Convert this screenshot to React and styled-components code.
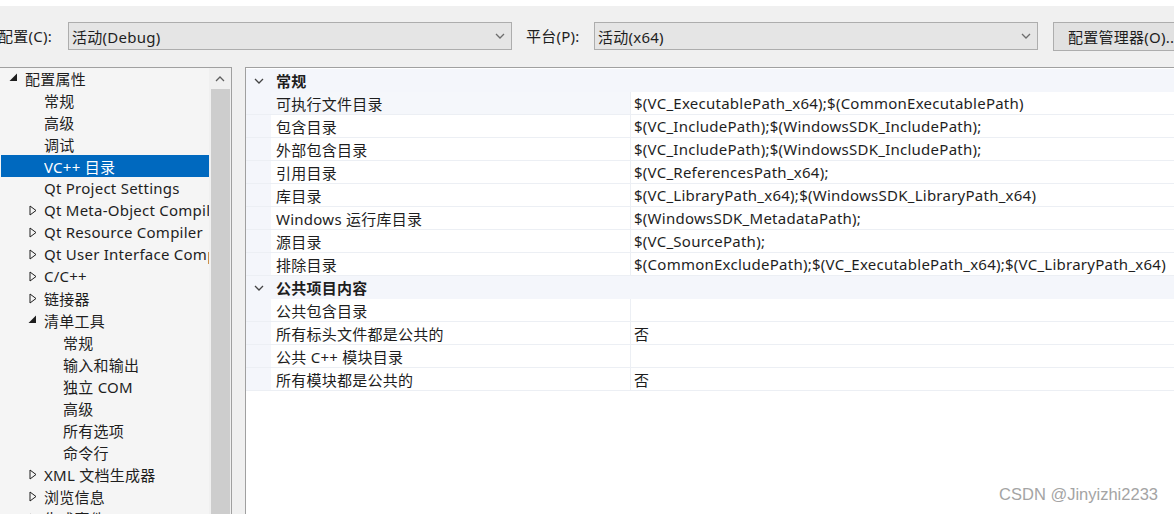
import React from 'react'
import styled, { createGlobalStyle } from 'styled-components'

const GlobalStyle = createGlobalStyle`
  html, body {
    margin: 0;
    padding: 0;
    background: #ffffff;
  }
  body {
    font-family: "Noto Sans", "Noto Sans CJK SC", sans-serif;
    font-size: 15px;
    letter-spacing: 0.25px;
    color: #1e1e1e;
  }
`

const tree = [
  { label: '配置属性', level: 0, arrow: 'open' },
  { label: '常规', level: 1 },
  { label: '高级', level: 1 },
  { label: '调试', level: 1 },
  { label: 'VC++ 目录', level: 1, selected: true },
  { label: 'Qt Project Settings', level: 1 },
  { label: 'Qt Meta-Object Compiler', level: 1, arrow: 'closed' },
  { label: 'Qt Resource Compiler', level: 1, arrow: 'closed' },
  { label: 'Qt User Interface Compiler', level: 1, arrow: 'closed' },
  { label: 'C/C++', level: 1, arrow: 'closed' },
  { label: '链接器', level: 1, arrow: 'closed' },
  { label: '清单工具', level: 1, arrow: 'open' },
  { label: '常规', level: 2 },
  { label: '输入和输出', level: 2 },
  { label: '独立 COM', level: 2 },
  { label: '高级', level: 2 },
  { label: '所有选项', level: 2 },
  { label: '命令行', level: 2 },
  { label: 'XML 文档生成器', level: 1, arrow: 'closed' },
  { label: '浏览信息', level: 1, arrow: 'closed' },
  { label: '生成事件', level: 1, arrow: 'closed' },
]

const groups = [
  {
    title: '常规',
    rows: [
      ['可执行文件目录', '$(VC_ExecutablePath_x64);$(CommonExecutablePath)', true],
      ['包含目录', '$(VC_IncludePath);$(WindowsSDK_IncludePath);'],
      ['外部包含目录', '$(VC_IncludePath);$(WindowsSDK_IncludePath);'],
      ['引用目录', '$(VC_ReferencesPath_x64);'],
      ['库目录', '$(VC_LibraryPath_x64);$(WindowsSDK_LibraryPath_x64)'],
      ['Windows 运行库目录', '$(WindowsSDK_MetadataPath);'],
      ['源目录', '$(VC_SourcePath);'],
      ['排除目录', '$(CommonExcludePath);$(VC_ExecutablePath_x64);$(VC_LibraryPath_x64)'],
    ],
  },
  {
    title: '公共项目内容',
    rows: [
      ['公共包含目录', ''],
      ['所有标头文件都是公共的', '否'],
      ['公共 C++ 模块目录', ''],
      ['所有模块都是公共的', '否'],
    ],
  },
]

const Chevron = ({ up }) => (
  <svg width="10" height="6" viewBox="0 0 10 6">
    <polyline
      points={up ? '1,5 5,1 9,5' : '1,1 5,5 9,1'}
      fill="none"
      stroke="currentColor"
      strokeWidth="1.3"
    />
  </svg>
)

const TreeArrow = ({ kind }) => {
  if (kind === 'open') {
    return (
      <svg width="9" height="9" viewBox="0 0 9 9">
        <polygon points="8,0.5 8,8 0.5,8" fill="#1e1e1e" />
      </svg>
    )
  }
  if (kind === 'closed') {
    return (
      <svg width="8" height="11" viewBox="0 0 8 11">
        <polygon points="1,1 7,5.5 1,10" fill="none" stroke="#1e1e1e" strokeWidth="1" />
      </svg>
    )
  }
  return null
}

const App = () => {
  return (
    <Page>
      <GlobalStyle />
      <TopStrip />
      <Window>
        <Toolbar>
          <Label first>配置(C):</Label>
          <Combo>
            <span>活动(Debug)</span>
            <ComboArrow><Chevron /></ComboArrow>
          </Combo>
          <Label>平台(P):</Label>
          <Combo>
            <span>活动(x64)</span>
            <ComboArrow><Chevron /></ComboArrow>
          </Combo>
          <Button>配置管理器(O)...</Button>
        </Toolbar>
        <Body>
          <TreePanel>
            <TreeList>
              {tree.map((item, i) => (
                <TreeRow key={i} level={item.level} selected={item.selected}>
                  <ArrowBox open={item.arrow === 'open'}>
                    <TreeArrow kind={item.arrow} />
                  </ArrowBox>
                  <TreeText>{item.label}</TreeText>
                </TreeRow>
              ))}
            </TreeList>
            <ScrollTrack>
              <ScrollButton><Chevron up /></ScrollButton>
              <ScrollThumb />
            </ScrollTrack>
          </TreePanel>
          <GridPanel>
            {groups.map((g) => (
              <React.Fragment key={g.title}>
                <CategoryRow>
                  <Margin><Chevron /></Margin>
                  <CategoryTitle>{g.title}</CategoryTitle>
                </CategoryRow>
                {g.rows.map(([name, value, active]) => (
                  <PropRow key={name}>
                    <Margin />
                    <NameCell active={active}>{name}</NameCell>
                    <ValueCell>{value}</ValueCell>
                  </PropRow>
                ))}
              </React.Fragment>
            ))}
          </GridPanel>
        </Body>
        <Watermark>CSDN @Jinyizhi2233</Watermark>
      </Window>
    </Page>
  )
}

const Page = styled.div`
  width: 1174px;
  height: 514px;
  overflow: hidden;
  display: flex;
  flex-direction: column;
`
const TopStrip = styled.div`
  height: 6px;
  background: #ffffff;
  flex-shrink: 0;
`
const Window = styled.div`
  position: relative;
  flex: 1;
  display: flex;
  flex-direction: column;
  background: #f0f0f0;
  min-height: 0;
`
const Toolbar = styled.div`
  height: 61px;
  flex-shrink: 0;
  display: flex;
  align-items: flex-start;
  padding-top: 16px;
  box-sizing: border-box;
  white-space: nowrap;
`
const Label = styled.span`
  flex-shrink: 0;
  height: 28px;
  line-height: 28px;
  margin-left: ${(p) => (p.first ? '-2px' : '14px')};
  margin-right: ${(p) => (p.first ? '13px' : '14px')};
  width: ${(p) => (p.first ? '57px' : '54px')};
`
const Combo = styled.div`
  width: 444px;
  height: 28px;
  box-sizing: border-box;
  border: 1px solid #adadad;
  background: #e5e5e5;
  display: flex;
  align-items: center;
  justify-content: space-between;
  padding: 0 6px 0 3px;
  flex-shrink: 0;
`
const ComboArrow = styled.span`
  color: #6d6d6d;
  display: flex;
`
const Button = styled.div`
  margin-left: 15px;
  height: 29px;
  box-sizing: border-box;
  border: 1px solid #adadad;
  background: #e1e1e1;
  display: flex;
  align-items: center;
  padding: 0 14px;
  flex-shrink: 0;
`
const Body = styled.div`
  flex: 1;
  display: flex;
  gap: 13px;
  min-height: 0;
`
const TreePanel = styled.div`
  width: 232px;
  flex-shrink: 0;
  box-sizing: border-box;
  border-top: 1px solid #a0a0a0;
  border-right: 1px solid #a0a0a0;
  display: flex;
  background: #f5f5f5;
  overflow: hidden;
`
const TreeList = styled.div`
  flex: 1;
  min-width: 0;
  padding: 0 0 0 1px;
  overflow: hidden;
`
const TreeRow = styled.div`
  height: 22px;
  display: flex;
  align-items: center;
  padding-left: ${(p) => 5 + p.level * 19}px;
  background: ${(p) => (p.selected ? '#0069bf' : 'transparent')};
  color: ${(p) => (p.selected ? '#ffffff' : '#1e1e1e')};
  white-space: nowrap;
  margin-top: -1px;
  margin-bottom: 1px;
`
const ArrowBox = styled.span`
  width: 19px;
  flex-shrink: 0;
  display: flex;
  align-items: center;
  padding-left: ${(p) => (p.open ? '3px' : '4px')};
  box-sizing: border-box;
  margin-top: ${(p) => (p.open ? '-2px' : '0')};
`
const TreeText = styled.span`
  overflow: hidden;
`
const ScrollTrack = styled.div`
  width: 22px;
  flex-shrink: 0;
  background: #f0f0f0;
  display: flex;
  flex-direction: column;
  align-items: center;
`
const ScrollButton = styled.div`
  height: 21px;
  width: 100%;
  display: flex;
  align-items: center;
  justify-content: center;
  color: #606060;
`
const ScrollThumb = styled.div`
  flex: 1;
  width: 19px;
  margin-left: 1px;
  background: #cdcdcd;
`
const GridPanel = styled.div`
  flex: 1;
  min-width: 0;
  box-sizing: border-box;
  border-top: 1px solid #a0a0a0;
  border-left: 1px solid #a0a0a0;
  background: #ffffff;
  padding-top: 1px;
  overflow: hidden;
`
const CategoryRow = styled.div`
  height: 23px;
  display: flex;
  align-items: center;
  background: #f4f6fb;
`
const Margin = styled.div`
  width: 25px;
  align-self: stretch;
  flex-shrink: 0;
  display: flex;
  align-items: center;
  justify-content: center;
  background: #f4f6fb;
  color: #444;
`
const CategoryTitle = styled.span`
  font-weight: 700;
  padding-left: 5px;
`
const PropRow = styled.div`
  height: 23px;
  display: flex;
  box-sizing: border-box;
  border-bottom: 1px solid #eceff4;
  white-space: nowrap;
`
const NameCell = styled.div`
  width: 359px;
  flex-shrink: 0;
  box-sizing: border-box;
  padding-left: 5px;
  display: flex;
  align-items: center;
  background: ${(p) => (p.active ? '#f5f7fb' : '#ffffff')};
`
const ValueCell = styled.div`
  flex: 1;
  box-sizing: border-box;
  border-left: 1px solid #eceff4;
  padding-left: 3px;
  display: flex;
  align-items: center;
`
const Watermark = styled.div`
  position: absolute;
  right: 16px;
  bottom: 10px;
  font-family: "Liberation Sans", Arial, sans-serif;
  font-size: 16.5px;
  letter-spacing: 0;
  color: #a4a4a4;
  text-shadow: 0 0 1px #ffffff;
`

export default App
